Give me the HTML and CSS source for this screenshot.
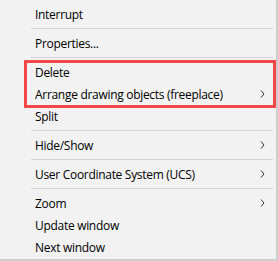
FILE: index.html
```html
<!DOCTYPE html>
<html lang="en">
<head>
  <meta charset="UTF-8">
  <meta name="viewport" content="width=device-width, initial-scale=1.0">
  <title>Context menu</title>
  <link rel="stylesheet" href="styles.css">
</head>
<body>
  <div class="menu">
    <div class="item">Interrupt</div>
    <div class="sep"></div>
    <div class="item">Properties...</div>
    <div class="sep"></div>
    <div class="item">Delete</div>
    <div class="item">Arrange drawing objects (freeplace)<svg class="arrow" width="5" height="8" viewBox="0 0 5 8"><path d="M1 0.5 L4 4 L1 7.5" fill="none" stroke="#333" stroke-width="1"/></svg></div>
    <div class="item">Split</div>
    <div class="sep"></div>
    <div class="item">Hide/Show<svg class="arrow" width="5" height="8" viewBox="0 0 5 8"><path d="M1 0.5 L4 4 L1 7.5" fill="none" stroke="#333" stroke-width="1"/></svg></div>
    <div class="sep"></div>
    <div class="item">User Coordinate System (UCS)<svg class="arrow" width="5" height="8" viewBox="0 0 5 8"><path d="M1 0.5 L4 4 L1 7.5" fill="none" stroke="#333" stroke-width="1"/></svg></div>
    <div class="sep"></div>
    <div class="item">Zoom<svg class="arrow" width="5" height="8" viewBox="0 0 5 8"><path d="M1 0.5 L4 4 L1 7.5" fill="none" stroke="#333" stroke-width="1"/></svg></div>
    <div class="item">Update window</div>
    <div class="item">Next window</div>
    <div class="highlight"></div>
  </div>
</body>
</html>
```

FILE: styles.css
```css
body { margin: 0; background: #ffffff; font-family: "Open Sans", "Noto Sans", sans-serif; }
.menu { position: relative; width: 278px; box-sizing: border-box; background: #f2f2f2; padding-top: 3px; padding-bottom: 1px; border-right: 2px solid #cdcdcd; border-bottom: 2px solid #cdcdcd; }
.item { display: flex; align-items: center; justify-content: space-between; height: 22px; padding-left: 35px; padding-right: 11px; font-size: 12px; letter-spacing: -0.3px; color: #000; }
.sep { height: 1px; margin: 3px 3px 3px 31px; background: #d5d5d5; }
.arrow { display: block; }
.highlight { position: absolute; left: 24px; top: 60px; width: 252px; height: 48px; box-sizing: border-box; border: 3px solid #f04848; }
```
